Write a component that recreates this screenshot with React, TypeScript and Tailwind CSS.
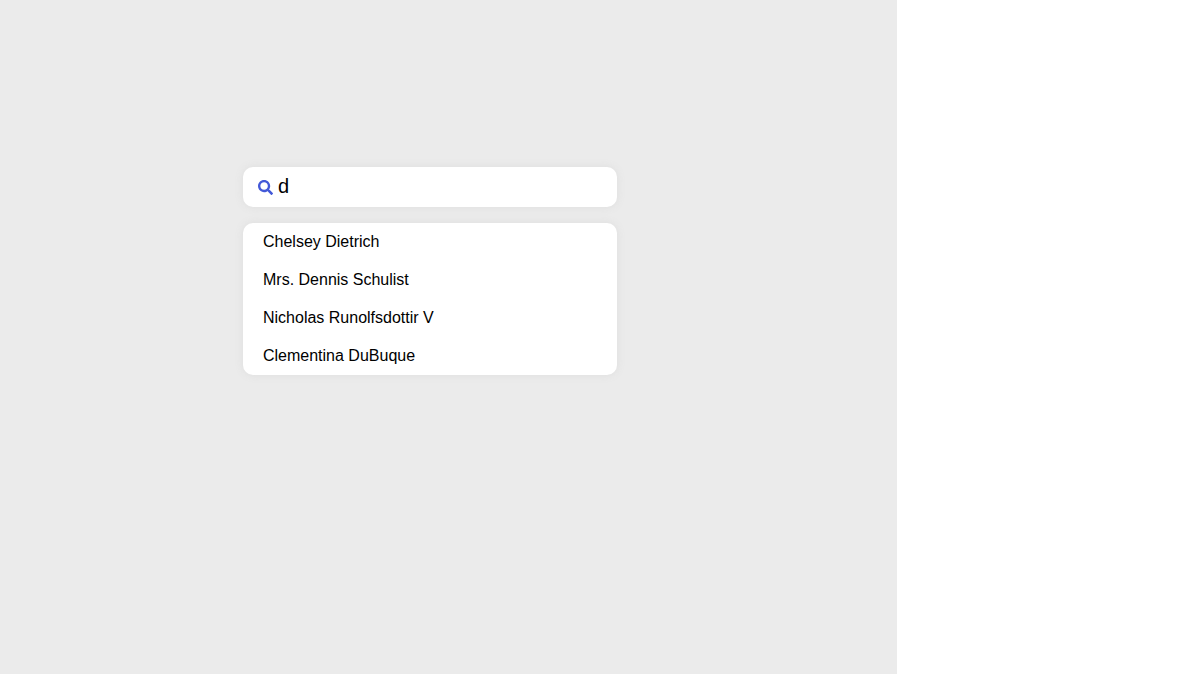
import { useState } from "react";
import { FaSearch } from "react-icons/fa";

const names = [
  "Chelsey Dietrich",
  "Mrs. Dennis Schulist",
  "Nicholas Runolfsdottir V",
  "Clementina DuBuque",
];

export default function App() {
  const [query, setQuery] = useState("d");
  const results = names.filter((name) =>
    name.toLowerCase().includes(query.toLowerCase()),
  );

  return (
    <div className="flex min-h-screen bg-white font-['Liberation_Sans',Arial,sans-serif] text-black">
      <main className="grid w-[74.5%] grid-cols-[243fr_374fr_280fr] content-start bg-[#ebebeb] pt-[167px]">
        <div className="col-start-2 flex min-w-0 flex-col gap-4">
          <label className="flex h-10 items-center rounded-[10px] bg-white px-[15px] shadow-[0_0_8px_#ddd]">
            <FaSearch className="size-[15px] shrink-0 text-[#4359d8]" aria-hidden="true" />
            <input
              type="text"
              aria-label="Search"
              value={query}
              onChange={(event) => setQuery(event.target.value)}
              className="ml-[5px] h-full w-full min-w-0 bg-transparent pb-0.5 text-xl outline-none"
            />
          </label>
          <ul className="flex flex-col overflow-hidden rounded-[10px] bg-white shadow-[0_0_8px_#ddd]">
            {results.map((name) => (
              <li key={name}>
                <button
                  type="button"
                  onClick={() => setQuery(name)}
                  className="w-full px-5 py-[10px] text-left text-base leading-[18px] hover:bg-[#efefef]"
                >
                  {name}
                </button>
              </li>
            ))}
          </ul>
        </div>
      </main>
    </div>
  );
}
